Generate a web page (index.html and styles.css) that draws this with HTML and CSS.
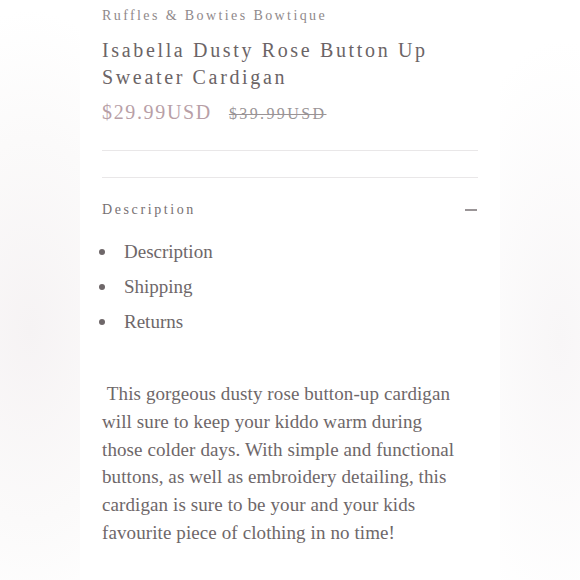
FILE: index.html
```html
<!DOCTYPE html>
<html>
<head>
<meta charset="utf-8">
<link rel="stylesheet" href="styles.css">
</head>
<body>
<div class="page">
  <main class="panel">
    <div class="brand">Ruffles &amp; Bowties Bowtique</div>
    <h1 class="title">Isabella Dusty Rose Button Up Sweater Cardigan</h1>
    <div class="prices">
      <span class="price">$29.99USD</span>
      <span class="old">$39.99USD</span>
    </div>
    <hr class="rule rule-a">
    <hr class="rule rule-b">
    <div class="acc-head">
      <span class="acc-title">Description</span>
      <span class="minus"></span>
    </div>
    <ul class="tabs">
      <li>Description</li>
      <li>Shipping</li>
      <li>Returns</li>
    </ul>
    <p class="desc">&nbsp;This gorgeous dusty rose button-up cardigan<br>will sure to keep your kiddo warm during<br>those colder days. With simple and functional<br>buttons, as well as embroidery detailing, this<br>cardigan is sure to be your and your kids<br>favourite piece of clothing in no time!</p>
  </main>
</div>
</body>
</html>
```

FILE: styles.css
```css
html, body {
  margin: 0;
  padding: 0;
}
body {
  width: 580px;
  height: 580px;
  overflow: hidden;
  background: radial-gradient(ellipse 160px 320px at 30px 330px, #f6f3f4 0%, #fbfafa 60%, #ffffff 100%),
              #fbfafa;
  font-family: "Liberation Serif", "DejaVu Serif", serif;
  color: #6e6769;
}
.page {
  display: flex;
  height: 580px;
  background: radial-gradient(ellipse 120px 300px at 560px 340px, #f8f6f7 0%, rgba(255,255,255,0) 100%);
}
.panel {
  margin-left: 80px;
  width: 376px;
  padding: 0 22px;
  background: #ffffff;
}
.brand {
  margin-top: 6px;
  font-size: 14px;
  letter-spacing: 2.4px;
  color: #8f898b;
  line-height: 20px;
}
.title {
  margin: 11px 0 0;
  font-weight: normal;
  font-size: 20px;
  line-height: 27px;
  letter-spacing: 2.65px;
  color: #6b6466;
}
.prices {
  margin-top: 8px;
  display: flex;
  align-items: baseline;
  gap: 17px;
  line-height: 26px;
}
.price {
  font-size: 20px;
  letter-spacing: 1.65px;
  color: #b89fa7;
}
.old {
  font-size: 16px;
  letter-spacing: 2.4px;
  color: #9a9496;
  text-decoration: line-through;
}
.rule {
  border: 0;
  height: 1px;
  background: #e9e7e8;
  margin: 0;
}
.rule-a { margin-top: 23px; }
.rule-b { margin-top: 26px; }
.acc-head {
  margin-top: 23px;
  display: flex;
  justify-content: space-between;
  align-items: center;
  line-height: 18px;
}
.acc-title {
  font-size: 14px;
  letter-spacing: 2.6px;
  color: #777072;
}
.minus {
  width: 12px;
  height: 2px;
  margin-right: 1px;
  background: #9a9597;
}
.tabs {
  margin: 15px 0 0;
  padding: 0;
  list-style: none;
}
.tabs li {
  position: relative;
  padding-left: 22px;
  font-size: 19px;
  line-height: 35px;
  color: #6e6769;
}
.tabs li::before {
  content: "";
  position: absolute;
  left: -3px;
  top: 15px;
  width: 6px;
  height: 6px;
  border-radius: 50%;
  background: #6e6769;
}
.desc {
  margin: 41px 0 0;
  font-size: 19px;
  letter-spacing: 0.1px;
  line-height: 27.8px;
  color: #6e6769;
}
```
